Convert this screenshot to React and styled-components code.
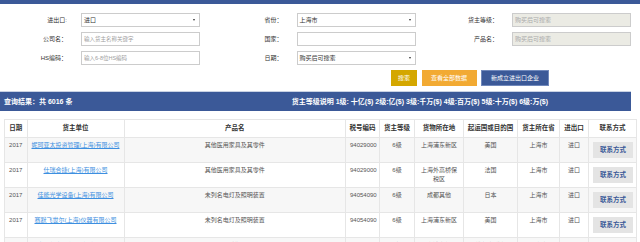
import React from 'react';
import styled, { createGlobalStyle } from 'styled-components';

const Global = createGlobalStyle`
  html, body { margin: 0; padding: 0; background: #fff; }
  body { font-family: "Liberation Sans", "Noto Sans CJK SC", sans-serif; }
`;

const Page = styled.div`
  zoom: 0.5;
  width: 1280px;
  font-size: 12px;
  color: #333;
`;

const TopBar = styled.div`
  height: 7px;
  background: #3b5998;
`;

const FormGrid = styled.div`
  display: grid;
  grid-template-columns: repeat(3, 431px);
  row-gap: 10px;
  padding-top: 18px;
`;

const Field = styled.div`
  display: flex;
  align-items: center;
  height: 28px;
`;

const Label = styled.label`
  width: 162px;
  box-sizing: border-box;
  padding-right: 28px;
  text-align: right;
  font-size: 12px;
  color: #333;
`;

const TextInput = styled.input`
  width: 238px;
  height: 28px;
  box-sizing: border-box;
  border: 2px solid #ccc;
  padding: 0 4px;
  font: inherit;
  font-size: 11px;
  background: ${(p) => (p.disabled ? '#ebebe4' : '#fff')};
  outline: none;
  &::placeholder {
    color: ${(p) => (p.disabled ? '#aaa' : '#a0a0a0')};
    font-size: ${(p) => (p.disabled ? '12px' : '11px')};
  }
`;

const SelectBox = styled.div`
  width: 238px;
  height: 28px;
  box-sizing: border-box;
  border: 2px solid #ccc;
  padding: 0 8px 0 4px;
  display: flex;
  align-items: center;
  justify-content: space-between;
  background: #fff;
  font-size: 12px;
  color: #333;
`;

const Caret = styled.span`
  width: 0;
  height: 0;
  border-left: 3px solid transparent;
  border-right: 3px solid transparent;
  border-top: 5px solid #333;
`;

const ButtonRow = styled.div`
  display: flex;
  gap: 9px;
  margin-top: 10px;
  padding-left: 782px;
`;

const ActionButton = styled.button`
  height: 32px;
  width: ${(p) => p.$w}px;
  border: 2px solid ${(p) => p.$border || p.$bg};
  background: ${(p) => p.$bg};
  color: #fff;
  font: inherit;
  font-size: 12px;
  padding: 0;
  cursor: pointer;
`;

const ResultBar = styled.div`
  margin-top: 10px;
  width: 1262px;
  height: 40px;
  box-sizing: border-box;
  border-top: 2px solid #c9d2e3;
  background: #3b5998;
  color: #fff;
  font-weight: bold;
  font-size: 14px;
  display: flex;
  align-items: center;
  justify-content: space-between;
  padding: 0 166px 0 8px;
`;

const Table = styled.table`
  margin: 16px 0 0 8px;
  width: 1264px;
  table-layout: fixed;
  border-collapse: collapse;
  font-size: 12px;
`;

const Th = styled.th`
  border: 2px solid #e6e6e6;
  padding: 9px 4px;
  line-height: 17px;
  font-size: 13px;
  font-weight: bold;
  color: #333;
  text-align: center;
  background: #fff;
`;

const Row = styled.tr`
  background: ${(p) => (p.$odd ? '#f7f7f7' : '#fff')};
`;

const Td = styled.td`
  border: 2px solid #e6e6e6;
  padding: ${(p) => (p.$btn ? '8px 8px' : '6px 8px')};
  line-height: 17px;
  color: #555;
  text-align: center;
  vertical-align: top;
`;

const CompanyLink = styled.a`
  color: #3d8fe0;
  text-decoration: underline;
  white-space: nowrap;
`;

const ContactButton = styled.button`
  width: 80px;
  height: 32px;
  border: none;
  background: #e4e4e4;
  color: #3b5998;
  font: inherit;
  font-size: 13px;
  font-weight: 600;
  padding: 0;
`;

const formRows = [
  [
    { label: '进出口:', kind: 'select', value: '进口' },
    { label: '省份：', kind: 'select', value: '上海市' },
    { label: '货主等级：', kind: 'disabled', placeholder: '购买后可搜索' },
  ],
  [
    { label: '公司名：', kind: 'input', placeholder: '输入货主名称关键字' },
    { label: '国家：', kind: 'input', placeholder: '' },
    { label: '产品名：', kind: 'disabled', placeholder: '购买后可搜索' },
  ],
  [
    { label: 'HS编码：', kind: 'input', placeholder: '输入6-8位HS编码' },
    { label: '日期：', kind: 'select', value: '购买后可搜索' },
    null,
  ],
];

const columns = [
  ['日期', 45],
  ['货主单位', 194],
  ['产品名', 443],
  ['税号编码', 68],
  ['货主等级', 70],
  ['货物所在地', 98],
  ['起运国或目的国', 108],
  ['货主所在省', 84],
  ['进出口', 58],
  ['联系方式', 96],
];

const rows = [
  ['2017', '妮珂亚太投资管理(上海)有限公司', '其他医用家具及其零件', '94029000', '6级', '上海浦东新区', '美国', '上海市', '进口'],
  ['2017', '仕瑞合捷(上海)有限公司', '其他医用家具及其零件', '94029000', '6级', '上海外高桥保税区', '法国', '上海市', '进口'],
  ['2017', '佳能光学设备(上海)有限公司', '未列名电灯及照明装置', '94054090', '6级', '成都其他', '日本', '上海市', '进口'],
  ['2017', '赛默飞世尔(上海)仪器有限公司', '未列名电灯及照明装置', '94054090', '6级', '上海浦东新区', '美国', '上海市', '进口'],
  ['2017', '大昌华嘉设备(上海)有限公司', '雕塑', '94189090', '6级', '上海浦东新区', '维尔京群岛', '上海市', '进口'],
];

function FormField({ f }) {
  if (!f) return <div />;
  return (
    <Field>
      <Label>{f.label}</Label>
      {f.kind === 'select' ? (
        <SelectBox>
          <span>{f.value}</span>
          <Caret />
        </SelectBox>
      ) : (
        <TextInput placeholder={f.placeholder} disabled={f.kind === 'disabled'} />
      )}
    </Field>
  );
}

export default function App() {
  return (
    <>
      <Global />
      <Page>
        <TopBar />
        <FormGrid>
          {formRows.flat().map((f, i) => (
            <FormField key={i} f={f} />
          ))}
        </FormGrid>
        <ButtonRow>
          <ActionButton $w={52} $bg="#d4a700">搜索</ActionButton>
          <ActionButton $w={110} $bg="#f2aa33">查看全部数据</ActionButton>
          <ActionButton $w={136} $bg="#3b5998" $border="#7088bb">新成立进出口企业</ActionButton>
        </ButtonRow>
        <ResultBar>
          <span>查询结果：共 6016 条</span>
          <span>货主等级说明 1级: 十亿($) 2级:亿($) 3级:千万($) 4级:百万($) 5级:十万($) 6级:万($)</span>
        </ResultBar>
        <Table>
          <colgroup>
            {columns.map(([name, w]) => (
              <col key={name} style={{ width: w }} />
            ))}
          </colgroup>
          <thead>
            <tr>
              {columns.map(([name]) => (
                <Th key={name}>{name}</Th>
              ))}
            </tr>
          </thead>
          <tbody>
            {rows.map((r, i) => (
              <Row key={i} $odd={i % 2 === 0}>
                <Td>{r[0]}</Td>
                <Td>
                  <CompanyLink href="#">{r[1]}</CompanyLink>
                </Td>
                {r.slice(2).map((c, j) => (
                  <Td key={j}>{c}</Td>
                ))}
                <Td $btn>
                  <ContactButton>联系方式</ContactButton>
                </Td>
              </Row>
            ))}
          </tbody>
        </Table>
      </Page>
    </>
  );
}
